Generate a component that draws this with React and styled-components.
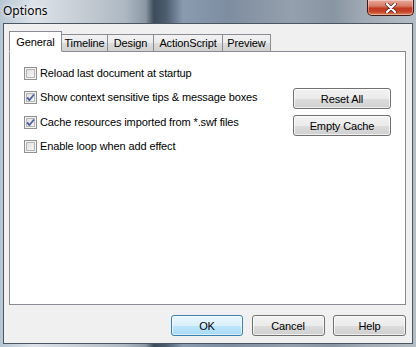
import React from "react";
import styled, { createGlobalStyle } from "styled-components";

const GlobalStyle = createGlobalStyle`
  html, body {
    margin: 0;
    padding: 0;
  }
  body {
    font-family: Tahoma, "Liberation Sans", "DejaVu Sans", sans-serif;
    font-size: 11px;
    letter-spacing: -0.12px;
    color: #000;
  }
`;

const Window = styled.div`
  width: 416px;
  height: 347px;
  display: flex;
  flex-direction: column;
  background:
    linear-gradient(
      90deg,
      #b7c6d4 0%,
      #dce2e8 8%,
      #c9d0d7 18%,
      #aeb8c2 30%,
      #8b98a4 35%,
      #3d4b5a 37%,
      #4e5e70 40%,
      #8a9bb0 44%,
      #7e8da0 55%,
      #94a0ad 70%,
      #8895a3 80%,
      #a2abb5 88%,
      #b4bcc4 100%
    );
  overflow: hidden;
`;

const TitleBar = styled.div`
  height: 23px;
  display: flex;
  justify-content: space-between;
  align-items: flex-start;
  padding-left: 3px;
  padding-right: 2px;
  box-sizing: border-box;
`;

const Title = styled.span`
  font-family: "Segoe UI", "Noto Sans", "Liberation Sans", sans-serif;
  font-size: 12px;
  letter-spacing: 0;
  line-height: 20px;
  margin-top: 1px;
  color: #000;
  text-shadow: 0 0 6px rgba(255, 255, 255, 0.9), 0 0 3px rgba(255, 255, 255, 0.9);
`;

const CloseButton = styled.div`
  width: 47px;
  height: 16px;
  box-sizing: border-box;
  border: 1px solid #3f1b17;
  border-top: none;
  border-radius: 0 0 5px 5px;
  background: linear-gradient(180deg, #e9a99c 0%, #d77b67 40%, #c2391f 55%, #c8462c 80%, #e08f66 100%);
  box-shadow: inset 0 0 0 1px rgba(255, 255, 255, 0.35);
  display: flex;
  align-items: center;
  justify-content: center;
`;

const Client = styled.div`
  flex: 1;
  margin: 0 3px 3px 3px;
  background: #f0f0f0;
  border: 1px solid #4b5663;
  display: flex;
  flex-direction: column;
  padding: 8px 6px 7px 5px;
`;

const TabStrip = styled.div`
  display: flex;
  align-items: flex-end;
  height: 20px;
  position: relative;
  z-index: 1;
  margin-bottom: -1px;
`;

const Tab = styled.div`
  box-sizing: border-box;
  width: ${(p) => p.$w}px;
  height: ${(p) => (p.$active ? "21px" : "18px")};
  margin-left: ${(p) => (p.$first ? "0" : "-1px")};
  border: 1px solid #898c95;
  border-bottom: ${(p) => (p.$active ? "1px solid #fff" : "1px solid #898c95")};
  background: ${(p) =>
    p.$active ? "#fff" : "linear-gradient(180deg, #f2f2f2 0%, #ebebeb 50%, #dddddd 51%, #cfcfcf 100%)"};
  display: flex;
  align-items: center;
  justify-content: center;
  line-height: 14px;
  white-space: nowrap;
  position: relative;
  z-index: ${(p) => (p.$active ? 2 : 1)};
`;

const Panel = styled.div`
  height: 254px;
  box-sizing: border-box;
  border: 1px solid #898c95;
  background: #fff;
  display: flex;
  justify-content: space-between;
  padding: 15px 14px 0 14px;
`;

const OptionList = styled.div`
  display: flex;
  flex-direction: column;
  gap: 11.4px;
`;

const OptionRow = styled.label`
  display: flex;
  align-items: center;
  gap: 3px;
  height: 13px;
  line-height: 13px;
`;

const Box = styled.span`
  width: 13px;
  height: 13px;
  box-sizing: border-box;
  border: 1px solid #8e8f8f;
  display: flex;
  align-items: center;
  justify-content: center;
  box-shadow: inset 0 0 0 1px #f4f4f4, inset 0 0 0 2px #b4b4b4;
  background-image: linear-gradient(135deg, #dcdcdc 0%, #fafafa 100%);
`;

const SideButtons = styled.div`
  display: flex;
  flex-direction: column;
  gap: 6px;
  margin-top: 21px;
`;

const Button = styled.div`
  width: ${(p) => p.$w}px;
  height: 21px;
  box-sizing: border-box;
  border: 1px solid ${(p) => (p.$default ? "#3c7fb1" : "#707070")};
  border-radius: 3px;
  background: ${(p) =>
    p.$default
      ? "linear-gradient(180deg, #eaf6fd 0%, #d9f0fc 50%, #bee6fd 51%, #a7d9f5 100%)"
      : "linear-gradient(180deg, #f2f2f2 0%, #ebebeb 50%, #dddddd 51%, #cfcfcf 100%)"};
  box-shadow: inset 0 0 0 1px ${(p) => (p.$default ? "rgba(255,255,255,0.6)" : "rgba(255,255,255,0.7)")};
  display: flex;
  align-items: center;
  justify-content: center;
`;

const Footer = styled.div`
  flex: 1;
  display: flex;
  justify-content: flex-end;
  align-items: flex-end;
  gap: 8.5px;
`;

const Check = () => (
  <svg width="9" height="9" viewBox="0 0 9 9">
    <path d="M1 4.5 L3.5 7 L8 1.5" fill="none" stroke="#4c61a6" strokeWidth="1.8" strokeLinejoin="round" />
  </svg>
);

const Checkbox = ({ checked, label }) => (
  <OptionRow>
    <Box>{checked && <Check />}</Box>
    <span>{label}</span>
  </OptionRow>
);

const tabs = [
  { label: "General", w: 53 },
  { label: "Timeline", w: 47 },
  { label: "Design", w: 47 },
  { label: "ActionScript", w: 70 },
  { label: "Preview", w: 49 },
];

const options = [
  { label: "Reload last document at startup", checked: false },
  { label: "Show context sensitive tips & message boxes", checked: true },
  { label: "Cache resources imported from *.swf files", checked: true },
  { label: "Enable loop when add effect", checked: false },
];

export default function App() {
  return (
    <>
      <GlobalStyle />
      <Window>
        <TitleBar>
          <Title>Options</Title>
          <CloseButton>
            <svg width="12" height="10" viewBox="0 0 12 10">
              <path d="M2 1 L10 9 M10 1 L2 9" stroke="#4a2a25" strokeWidth="3.6" strokeLinecap="round" />
              <path d="M2 1 L10 9 M10 1 L2 9" stroke="#fff" strokeWidth="2.2" strokeLinecap="round" />
            </svg>
          </CloseButton>
        </TitleBar>
        <Client>
          <TabStrip>
            {tabs.map((t, i) => (
              <Tab key={t.label} $w={t.w} $active={i === 0} $first={i === 0}>
                {t.label}
              </Tab>
            ))}
          </TabStrip>
          <Panel>
            <OptionList>
              {options.map((o) => (
                <Checkbox key={o.label} {...o} />
              ))}
            </OptionList>
            <SideButtons>
              <Button $w={98}>Reset All</Button>
              <Button $w={98}>Empty Cache</Button>
            </SideButtons>
          </Panel>
          <Footer>
            <Button $w={72} $default>OK</Button>
            <Button $w={73}>Cancel</Button>
            <Button $w={73}>Help</Button>
          </Footer>
        </Client>
      </Window>
    </>
  );
}
